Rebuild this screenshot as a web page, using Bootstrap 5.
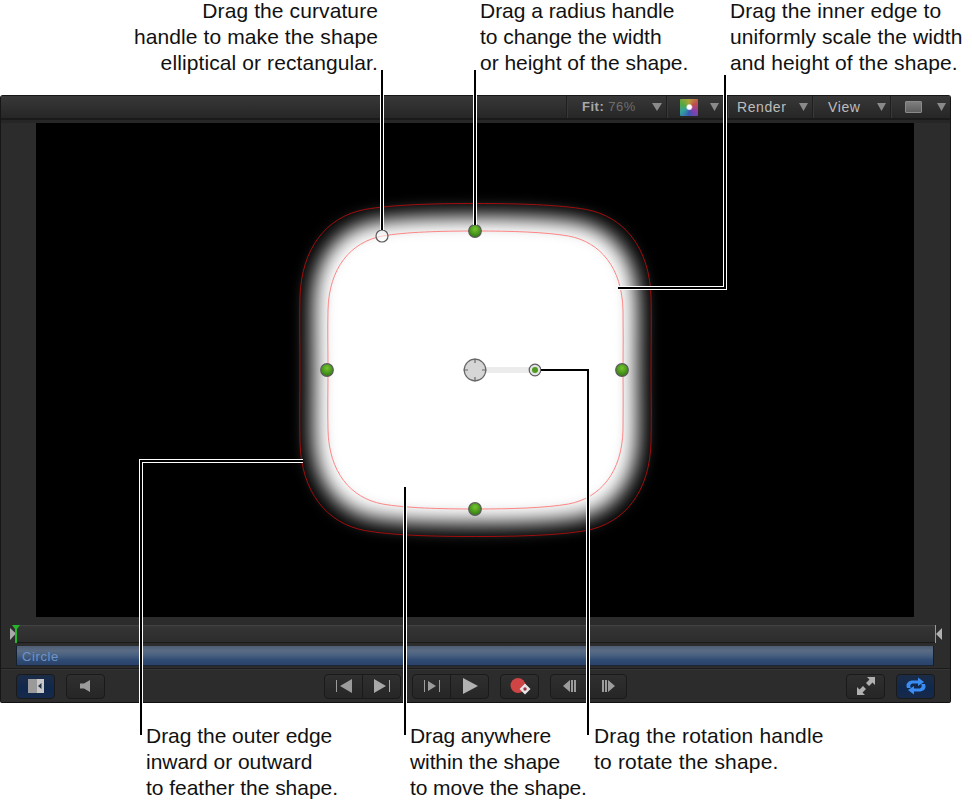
<!DOCTYPE html>
<html lang="en">
<head>
<meta charset="utf-8">
<title>Circle shape controls</title>
<link rel="stylesheet" href="https://cdn.jsdelivr.net/npm/bootstrap@5.3.0/dist/css/bootstrap.min.css">
<style>
html,body{margin:0;background:#fff}
.stage{position:relative;width:972px;height:806px;overflow:hidden;font-family:"Liberation Sans",Arial,sans-serif}
.note{font-size:21px;line-height:26px;color:#111;white-space:nowrap;letter-spacing:.1px}
.top-notes{height:97px;margin-top:-2px}
.n1{width:378px;text-align:right}
.n2{margin-left:102px;width:250px;letter-spacing:-.03px}
.n3{margin-left:0}
.bottom-notes{padding-top:20px;padding-left:146px}
.n4{width:264px;letter-spacing:-.03px}
.n5{width:184px;letter-spacing:-.1px}
.n6{letter-spacing:.18px}
.win{width:951px;height:608px;background:#2c2c2c;border:1px solid #161616;border-bottom:1px solid #111;border-radius:3px 3px 2px 2px}
.tbar{height:22px;background:linear-gradient(#383838,#262626);border-bottom:2px solid #1a1a1a;box-sizing:content-box;font-size:14px;font-weight:400;letter-spacing:.6px;color:#bdbdbd}
.tool{height:22px;border-left:1px solid #1f1f1f;box-shadow:inset 1px 0 0 #383838}
.t-fit{width:100px;padding-left:15px;font-size:13px;letter-spacing:.5px}
.t-col{width:61px;padding-left:13px}
.t-ren{width:85px;padding-left:9px}
.t-view{width:78px;padding-left:15px}
.t-win{width:60px;padding-left:14px}
.dim{color:#6d6d6d;font-weight:400;margin-left:4px}
.fit-b{font-weight:700;color:#a8a8a8}
.tri{display:block;flex:none}
.swatch{width:18px;height:17px;border-radius:1px;background:radial-gradient(circle at 52% 48%,#fff 0 2px,transparent 3.5px),conic-gradient(#b3a13c,#c24c4c,#8c3fa8,#3c55b5,#33a0a0,#5aa83c,#b3a13c)}
.winbox{width:17px;height:12px;border-radius:1px;background:linear-gradient(#7e7e7e,#5f5f5f);border:1px solid #8a8a8a}
.gutter{height:3px;background:#262626}
.viewer{width:878px;height:494px;margin-left:35px;background:#000}
.viewer svg{display:block}
.track-wrap{padding:8px 15px 0 15px;height:26px}
.track{position:relative;height:18px;background:linear-gradient(#474747,#343434 10%,#2d2d2d);border-bottom:1px solid #1a1a1a}
.pin{position:absolute;top:0;display:block}
.p-start{left:-7px}
.p-end{right:-8px}
.clipbar{margin:3px 15px 0 15px;height:20px;width:918px;padding-left:5px;line-height:21px;font-size:13px;letter-spacing:.6px;color:#6c93cb;background:linear-gradient(#4d5d73,#5a6b84 25%,#48607f 50%,#2f4b73 75%,#2b4269);border-left:1px solid #14202f;border-right:1px solid #14202f;border-bottom:1px solid #1a2636}
.ctl{height:35px;margin-top:2px;padding:5px 15px 0;border-top:1px solid #1b1b1b;box-shadow:inset 0 1px 0 #353535}
.tb{width:39px;height:25px;padding:0;display:inline-flex;align-items:center;justify-content:center;background:linear-gradient(#2f2f2f,#262626);border:1px solid #1a1a1a;border-radius:4px;--bs-btn-hover-bg:#2f2f2f;--bs-btn-active-bg:#2f2f2f}
.tb.on{background:linear-gradient(#1c2c46,#10284e 60%,#17294a)}
.tb svg{display:block}
.gap-a{gap:11px}
.gap-b{gap:11px}
.leaders{position:absolute;left:0;top:0;pointer-events:none}
</style>
</head>
<body>
<div class="stage">
  <div class="top-notes d-flex align-items-start">
    <div class="note n1">Drag the curvature<br>handle to make the shape<br>elliptical or rectangular.</div>
    <div class="note n2">Drag a radius handle<br>to change the width<br>or height of the shape.</div>
    <div class="note n3">Drag the inner edge to<br>uniformly scale the width<br>and height of the shape.</div>
  </div>

  <div class="win d-flex flex-column">
    <div class="tbar d-flex justify-content-end">
      <div class="tool t-fit d-flex align-items-center"><span class="fit-b">Fit:</span><span class="dim">76%</span>
        <svg class="tri ms-auto me-1" width="10" height="8" viewBox="0 0 10 8"><path d="M0 0H10L5 8Z" fill="#8a8a8a"/></svg></div>
      <div class="tool t-col d-flex align-items-center"><div class="swatch"></div>
        <svg class="tri ms-auto me-2" width="9" height="8" viewBox="0 0 9 8"><path d="M0 0H9L4.5 8Z" fill="#8a8a8a"/></svg></div>
      <div class="tool t-ren d-flex align-items-center"><span>Render</span>
        <svg class="tri ms-auto me-1" width="9" height="8" viewBox="0 0 9 8"><path d="M0 0H9L4.500 8Z" fill="#8a8a8a"/></svg></div>
      <div class="tool t-view d-flex align-items-center"><span>View</span>
        <svg class="tri ms-auto me-1" width="9" height="8" viewBox="0 0 9 8"><path d="M0 0H9L4.500 8Z" fill="#8a8a8a"/></svg></div>
      <div class="tool t-win d-flex align-items-center"><div class="winbox"></div>
        <svg class="tri ms-auto me-1" width="9" height="8" viewBox="0 0 9 8"><path d="M0 0H9L4.500 8Z" fill="#8a8a8a"/></svg></div>
    </div>
    <div class="gutter"></div>
    <div class="viewer">
      <svg width="878" height="494" viewBox="0 0 878 494">
        <defs>
          <path id="shp" vector-effect="non-scaling-stroke" d="M0 -139C-35 -139 -70 -138 -93 -134C-125 -128 -146.500 -102 -147.500 -60C-148 -40 -147.500 -20 -147.500 0C-147.500 20 -148 40 -147.500 60C-146.500 102 -125 128 -93 134C-70 138 -35 139 0 139C35 139 70 138 93 134C125 128 146.500 102 147.500 60C148 40 147.500 20 147.500 0C147.500 -20 148 -40 147.500 -60C146.500 -102 125 -128 93 -134C70 -138 35 -139 0 -139Z"/>
          <filter id="fth" x="-20%" y="-20%" width="140%" height="140%" color-interpolation-filters="sRGB"><feGaussianBlur stdDeviation="9"/></filter>
          <radialGradient id="grn" cx="50%" cy="35%" r="65%"><stop offset="0" stop-color="#74c52f"/><stop offset="1" stop-color="#2f7a10"/></radialGradient>
        </defs>
        <g transform="translate(439.500 247)">
          <use href="#shp" transform="scale(1.1 1.105)" fill="#fff" filter="url(#fth)"/>
          <use href="#shp" transform="scale(1.19 1.198)" fill="none" stroke="#a00d0d" stroke-width="1"/>
          <use href="#shp" fill="none" stroke="#ff8585" stroke-width="1"/>
        </g>
        <g stroke="#5c5c5c" stroke-width="1.200" fill="url(#grn)">
          <circle cx="439" cy="108" r="6.300"/><circle cx="291" cy="247" r="6.300"/><circle cx="586" cy="247" r="6.300"/><circle cx="439" cy="386" r="6.300"/>
        </g>
        <circle cx="346" cy="113" r="6" fill="#fff" fill-opacity=".55" stroke="#5a5a5a" stroke-width="1.200"/>
        <rect x="450" y="244" width="44" height="6" fill="#ececec"/>
        <circle cx="439" cy="247" r="10.800" fill="#d6d6d6" stroke="#666" stroke-width="1.200"/>
        <path d="M439 235.500V240M439 254V258.500M427.500 247H432M446 247H450.500" stroke="#666" stroke-width="1.200"/>
        <circle cx="499" cy="247" r="5.800" fill="#e4e4e4" stroke="#5c5c5c" stroke-width="1.200"/>
        <circle cx="499" cy="247" r="3" fill="#4f9a1f"/>
      </svg>
    </div>
    <div class="track-wrap">
      <div class="track">
        <svg class="pin p-start" width="14" height="18" viewBox="0 0 14 18"><path d="M1 3L7 8.500L1 15Z" fill="#a9a9a9"/><path d="M3 0H11L8 4V18H6V4Z" fill="#27b52a"/></svg>
        <svg class="pin p-end" width="9" height="18" viewBox="0 0 9 18"><path d="M1 0H2V18H1Z" fill="#9a9a9a"/><path d="M8 3V15L2 9Z" fill="#b0b0b0"/></svg>
      </div>
    </div>
    <div class="clipbar">Circle</div>
    <div class="ctl d-flex justify-content-between align-items-start">
      <div class="d-flex gap-a">
        <button type="button" class="btn tb on" aria-label="Panel"><svg width="18" height="16" viewBox="0 0 18 16"><path d="M1 1H10V15H1Z" fill="#9a9a9a"/><path d="M10 1H17V15H10Z" fill="#c8c8c8"/><path d="M14.500 5V11L11 8Z" fill="#26324a"/></svg></button>
        <button type="button" class="btn tb" aria-label="Mute"><svg width="14" height="14" viewBox="0 0 14 14"><path d="M1 4.500H5L11 1V13L5 9.500H1Z" fill="#9c9c9c"/></svg></button>
      </div>
      <div class="d-flex gap-b">
        <div class="btn-group">
          <button type="button" class="btn tb" aria-label="Start"><svg width="18" height="14" viewBox="0 0 18 14"><path d="M1 1H2V13H1ZM17 0V14L5 7Z" fill="#9c9c9c"/></svg></button>
          <button type="button" class="btn tb" aria-label="End"><svg width="18" height="14" viewBox="0 0 18 14"><path d="M1 0V14L13 7ZM16 1H17V13H16Z" fill="#a8a8a8"/></svg></button>
        </div>
        <div class="btn-group">
          <button type="button" class="btn tb" aria-label="Play around"><svg width="18" height="14" viewBox="0 0 18 14"><path d="M1 1H2V13H1ZM16 1H17V13H16ZM5 2V12L13 7Z" fill="#9c9c9c"/></svg></button>
          <button type="button" class="btn tb" aria-label="Play"><svg width="16" height="18" viewBox="0 0 16 18"><path d="M1 1V17L16 9Z" fill="#b2b2b2"/></svg></button>
        </div>
        <button type="button" class="btn tb" aria-label="Record"><svg width="22" height="18" viewBox="0 0 22 18"><circle cx="9" cy="8.500" r="7.500" fill="#cf4444"/><path d="M16 6.500L21.500 12L16 17.500L10.500 12Z" fill="#e6e6e6"/><circle cx="16" cy="12" r="1.700" fill="#9c3040"/></svg></button>
        <div class="btn-group">
          <button type="button" class="btn tb" aria-label="Previous frame"><svg width="14" height="12" viewBox="0 0 14 12"><path d="M7 0V12L0 6ZM8 0H10V12H8ZM11 0H13V12H11Z" fill="#9c9c9c"/></svg></button>
          <button type="button" class="btn tb" aria-label="Next frame"><svg width="14" height="12" viewBox="0 0 14 12"><path d="M1 0H3V12H1ZM4 0H6V12H4ZM7 0V12L14 6Z" fill="#9c9c9c"/></svg></button>
        </div>
      </div>
      <div class="d-flex gap-a">
        <button type="button" class="btn tb" aria-label="Full screen"><svg width="20" height="20" viewBox="0 0 20 20"><path d="M11 1H19V9L16.500 6.500L13 10L10 7L13.500 3.500ZM1 19V11L3.500 13.500L7 10L10 13L6.500 16.500L9 19Z" fill="#b0b0b0"/></svg></button>
        <button type="button" class="btn tb on" aria-label="Loop"><svg width="24" height="18" viewBox="0 0 24 18"><path d="M3 11C1 6 5 3.500 9 3.500H14V0.500L20 5L14 9V6.500H9C6.500 6.500 5.500 9 7 11Z M21 7C23 12 19 14.500 15 14.500H10V17.500L4 13L10 9V11.500H15C17.500 11.500 18.500 9 17 7Z" fill="#3a8bf2"/></svg></button>
      </div>
    </div>
  </div>

  <div class="bottom-notes d-flex align-items-start">
    <div class="note n4">Drag the outer edge<br>inward or outward<br>to feather the shape.</div>
    <div class="note n5">Drag anywhere<br>within the shape<br>to move the shape.</div>
    <div class="note n6">Drag the rotation handle<br>to rotate the shape.</div>
  </div>

  <svg class="leaders" width="972" height="806" viewBox="0 0 972 806" fill="none">
    <g stroke="#fff" stroke-width="4">
      <path d="M382 70V230"/><path d="M475 70V225"/><path d="M725 75V288H618"/><path d="M141 735V461H303"/><path d="M405 735V487"/><path d="M588 735V370H541"/>
    </g>
    <g stroke="#000" stroke-width="2">
      <path d="M382 70V230"/><path d="M475 70V225"/><path d="M725 75V288H618"/><path d="M141 735V461H303"/><path d="M405 735V487"/><path d="M588 735V370H541"/>
    </g>
  </svg>
</div>
</body>
</html>
